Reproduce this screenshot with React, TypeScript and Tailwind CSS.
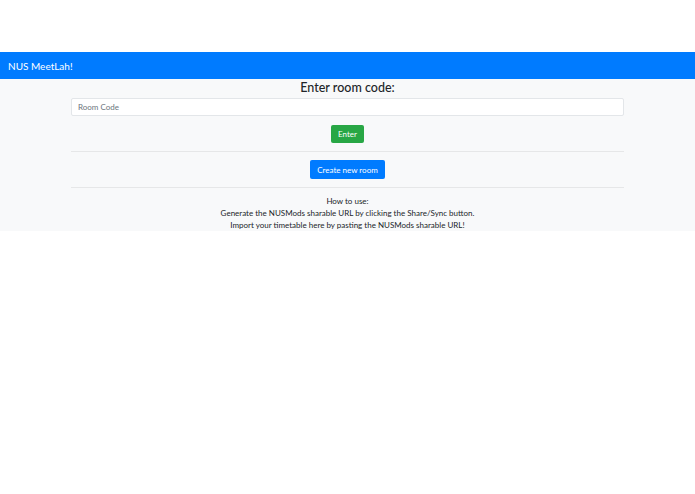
export default function App() {
  return (
    <div className="min-h-screen bg-white" style={{ fontFamily: 'Lato, "Open Sans", sans-serif' }}>
      <div className="h-[52px]" />
      <nav className="h-[27px] bg-[#007bff] flex items-center px-[8px]">
        <span className="text-white text-[10px] leading-none">NUS MeetLah!</span>
      </nav>
      <main className="bg-[#f8f9fa]">
        <div className="mx-[71px] flex flex-col items-center">
          <h2 className="text-[12.5px] font-medium text-[#212529] leading-[18px]">Enter room code:</h2>
          <input
            placeholder="Room Code"
            className="mt-[1px] w-full h-[18px] bg-white border border-[#e3e6e9] rounded-[2px] px-[6px] text-[8px] text-[#495057] placeholder:text-[#6c757d] outline-none"
          />
          <button className="mt-[9px] h-[18px] px-[7px] rounded-[2px] bg-[#28a745] text-white text-[8px]">
            Enter
          </button>
          <hr className="w-full mt-[8px] border-t border-[#e6e7e8]" />
          <button className="mt-[8px] h-[19px] px-[7px] rounded-[2px] bg-[#007bff] text-white text-[8px]">
            Create new room
          </button>
          <hr className="w-full mt-[8px] border-t border-[#e6e7e8]" />
          <div className="mt-[7px] text-center text-[8px] leading-[12px] text-[#212529]">
            <p>How to use:</p>
            <p>Generate the NUSMods sharable URL by clicking the Share/Sync button.</p>
            <p>Import your timetable here by pasting the NUSMods sharable URL!</p>
          </div>
        </div>
      </main>
    </div>
  );
}
